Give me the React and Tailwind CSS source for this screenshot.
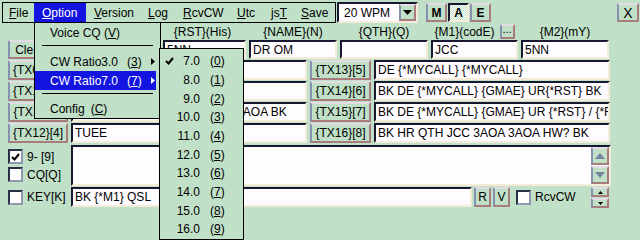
import React from 'react';

const raised =
  'border-2 border-t-[#e4dce4] border-l-[#8890b0] border-r-[#a87c7c] border-b-[#a87c7c] bg-[#c0e0c8]';
const sunken =
  'border-2 border-t-[#181830] border-l-[#181830] border-r-[#f4ecd8] border-b-[#f4ecd8] bg-[#fffcff]';

function Btn({ className = '', children }) {
  return (
    <div className={`${raised} flex items-center justify-center whitespace-nowrap overflow-hidden ${className}`}>
      {children}
    </div>
  );
}

function Field({ className = '', children }) {
  return (
    <div className={`${sunken} flex items-center pl-[2px] overflow-hidden whitespace-nowrap ${className}`}>
      {children}
    </div>
  );
}

function Tick({ className = '' }) {
  return (
    <svg width="9" height="8" viewBox="0 0 9 8" className={className}>
      <path d="M1 4 L3.5 6.5 L8 1" stroke="currentColor" strokeWidth="2" fill="none" />
    </svg>
  );
}

function Check({ checked, label, className = '' }) {
  return (
    <div className={`flex items-center ${className}`}>
      <div className="w-[15px] h-[15px] bg-white border-2 border-t-[#283048] border-l-[#283048] border-r-[#9098b0] border-b-[#9098b0] flex items-center justify-center">
        {checked && <Tick />}
      </div>
      {label && <span className="ml-[4px]">{label}</span>}
    </div>
  );
}

function RightArrow() {
  return (
    <svg width="4" height="7" viewBox="0 0 4 7">
      <path d="M0 0 L4 3.5 L0 7 Z" fill="currentColor" />
    </svg>
  );
}

function Tri({ up, w = 9, h = 5, color = '#000' }) {
  return (
    <svg width={w} height={h} viewBox={`0 0 ${w} ${h}`}>
      <path d={up ? `M0 ${h} L${w / 2} 0 L${w} ${h} Z` : `M0 0 L${w / 2} ${h} L${w} 0 Z`} fill={color} />
    </svg>
  );
}

function Mn({ text, at }) {
  return (
    <>
      {text.slice(0, at)}
      <u>{text[at]}</u>
      {text.slice(at + 1)}
    </>
  );
}

const menus = [
  { t: 'File', u: 0, w: 'w-[31px] pl-[6px]' },
  { t: 'Option', u: 0, w: 'w-[52px] pl-[8px]', on: true },
  { t: 'Version', u: 0, w: 'w-[55px] pl-[8px]' },
  { t: 'Log', u: 0, w: 'w-[35px] pl-[7px]' },
  { t: 'RcvCW', u: 0, w: 'w-[54px] pl-[7px]' },
  { t: 'Utc', u: 0, w: 'w-[34px] pl-[7px]' },
  { t: 'jsT', u: 2, w: 'w-[30px] pl-[7px]' },
  { t: 'Save', u: 0, w: 'flex-1 pl-[7px]' },
];

const txRows = [
  ['{TX09}[1]', 'CQ TEST DE {*MYCALL} {*M1}', '{TX13}[5]', 'DE {*MYCALL} {*MYCALL}'],
  ['{TX10}[2]', '', '{TX14}[6]', 'BK DE {*MYCALL} {GMAE} UR{*RST} BK'],
  ['{TX11}[3]', 'R TU {*RST} QTH JCC 3AOA 3AOA BK', '{TX15}[7]', 'BK DE {*MYCALL} {GMAE} UR {*RST} / {*RST} BK'],
  ['{TX12}[4]', 'TUEE', '{TX16}[8]', 'BK HR QTH JCC 3AOA 3AOA HW? BK'],
];

const ratios = ['7.0', '8.0', '9.0', '10.0', '11.0', '12.0', '13.0', '14.0', '15.0', '16.0'];

export default function App() {
  return (
    <div className="relative w-[640px] h-[240px] overflow-hidden bg-[#c0e0c8] text-black text-[12px] leading-[14px] font-['Liberation_Sans',Arial,sans-serif]">
      {/* top bar */}
      <div className="flex items-start pt-[2px] pl-[2px] h-[23px]">
        <div className="flex h-[21px] w-[334px] border border-black">
          {menus.map((m) => (
            <div
              key={m.t}
              className={`h-full flex items-center ${m.w} ${m.on ? 'bg-[#1414e0] text-white' : ''}`}
            >
              <span>
                <Mn text={m.t} at={m.u} />
              </span>
            </div>
          ))}
        </div>
        <div className={`${sunken} ml-[1px] w-[81px] h-[21px] flex items-center`}>
          <span className="flex-1 pl-[5px]">20 WPM</span>
          <Btn className="w-[17px] h-[17px]">
            <Tri />
          </Btn>
        </div>
        <div className="flex gap-[1px] ml-[8px] mt-[1px]">
          <Btn className="w-[21px] h-[19px] font-bold">M</Btn>
          <div className="w-[21px] h-[19px] flex items-center justify-center font-bold border-2 border-t-[#181830] border-l-[#181830] border-r-[#f4ecd8] border-b-[#f4ecd8] bg-[repeating-conic-gradient(#ffffff_0_25%,#c0e0c8_0_50%)] bg-[length:2px_2px]">
            A
          </div>
          <Btn className="w-[21px] h-[19px] font-bold">E</Btn>
        </div>
        <Btn className="ml-auto mr-[1px] mt-[1px] w-[22px] h-[19px] text-[14px]">X</Btn>
      </div>

      {/* labels + first inputs */}
      <div className="grid grid-cols-[60px_89px_83px_88px_88px_87px_88px] gap-x-[3px] pl-[8px]">
        <div className="h-[17px]" />
        <div className="h-[17px]" />
        <div className="h-[17px] flex items-center justify-center pr-[4px]">{'{RST}(His)'}</div>
        <div className="h-[17px] flex items-center justify-center">{'{NAME}(N)'}</div>
        <div className="h-[17px] flex items-center justify-center">{'{QTH}(Q)'}</div>
        <div className="h-[17px] flex items-center justify-center gap-[5px]">
          <span>{'{M1}(codE)'}</span>
          <Btn className="w-[15px] h-[15px] text-[11px] items-end pb-[1px]">...</Btn>
        </div>
        <div className="h-[17px] flex items-center justify-center">{'{M2}(mY)'}</div>

        <Btn className="w-[43px] h-[19px]">Clear</Btn>
        <Field className="h-[19px]" />
        <Field className="h-[19px]">5NN</Field>
        <Field className="h-[19px]">DR OM</Field>
        <Field className="h-[19px]" />
        <Field className="h-[19px]">JCC</Field>
        <Field className="h-[19px]">5NN</Field>
      </div>

      {/* tx rows */}
      <div className="grid grid-cols-[60px_236px_61px_236px] gap-x-[3px] gap-y-[1px] pl-[8px] mt-[1px]">
        {txRows.map((r) => (
          <React.Fragment key={r[0]}>
            <Btn className="h-[20px]">{r[0]}</Btn>
            <Field className="h-[20px]">{r[1]}</Field>
            <Btn className="h-[20px]">{r[2]}</Btn>
            <Field className="h-[20px]">{r[3]}</Field>
          </React.Fragment>
        ))}
      </div>

      {/* bottom area */}
      <div className="mt-[2px]">
        <div className="flex h-[41px]">
          <div className="w-[71px] pl-[8px] pt-[4px] flex flex-col gap-[3px]">
            <Check checked label="9- [9]" />
            <Check label="CQ[Q]" />
          </div>
          <div className={`${sunken} w-[540px] h-[41px] flex justify-end items-start`}>
            <div className="flex flex-col gap-[1px]">
              <Btn className="w-[18px] h-[18px]">
                <Tri up w={10} h={6} color="#7880a0" />
              </Btn>
              <Btn className="w-[18px] h-[18px]">
                <Tri w={10} h={6} color="#7880a0" />
              </Btn>
            </div>
          </div>
        </div>
        <div className="flex h-[20px] mt-[1px] items-center">
          <div className="w-[71px] pl-[8px]">
            <Check label="KEY[K]" />
          </div>
          <Field className="w-[401px] h-[20px]">BK {'{*M1}'} QSL</Field>
          <Btn className="ml-[2px] w-[17px] h-[20px]">R</Btn>
          <Btn className="ml-[2px] w-[17px] h-[20px]">V</Btn>
          <Check label="RcvCW" className="ml-[6px]" />
          <div className="ml-auto mr-[31px] flex flex-col gap-[1px] self-start">
            <Btn className="w-[18px] h-[10px]">
              <Tri up w={5} h={3} />
            </Btn>
            <Btn className="w-[18px] h-[10px]">
              <Tri w={5} h={3} />
            </Btn>
          </div>
        </div>
      </div>

      {/* Option menu */}
      <div className="absolute left-[34px] top-[22px] w-[127px] h-[97px] border border-black bg-[#c0e0c8] flex flex-col">
        <div className="h-[19px] flex items-center pl-[15px]">
          Voice CQ (<u>V</u>)
        </div>
        <div className="h-[10px] pt-[3px] px-[7px]">
          <div className="h-px bg-black" />
        </div>
        <div className="h-[19px] flex items-center pl-[15px] mr-[4px]">
          <span className="w-[77px]">CW Ratio3.0</span>
          <span>
            (<u>3</u>)
          </span>
          <span className="ml-auto mr-[1px] flex">
            <RightArrow />
          </span>
        </div>
        <div className="h-[19px] flex items-center pl-[15px] mr-[4px] bg-[#1414e0] text-white">
          <span className="w-[77px]">CW Ratio7.0</span>
          <span>
            (<u>7</u>)
          </span>
          <span className="ml-auto mr-[1px] flex">
            <RightArrow />
          </span>
        </div>
        <div className="h-[9px] pt-[3px] px-[7px]">
          <div className="h-px bg-black" />
        </div>
        <div className="h-[19px] flex items-center pl-[15px]">
          <span>Config</span>
          <span className="ml-[6px]">
            (<u>C</u>)
          </span>
        </div>
      </div>

      {/* CW Ratio submenu */}
      <div className="absolute left-[159px] top-[48px] w-[85px] h-[192px] border border-black bg-[#c0e0c8] pt-[3px]">
        {ratios.map((r, i) => (
          <div key={r} className="h-[18.67px] flex items-center">
            <span className="w-[16px] pl-[5px] flex">{i === 0 && <Tick />}</span>
            <span className="w-[24px] text-right">{r}</span>
            <span className="ml-[10px]">
              (<u>{i}</u>)
            </span>
          </div>
        ))}
      </div>
    </div>
  );
}
